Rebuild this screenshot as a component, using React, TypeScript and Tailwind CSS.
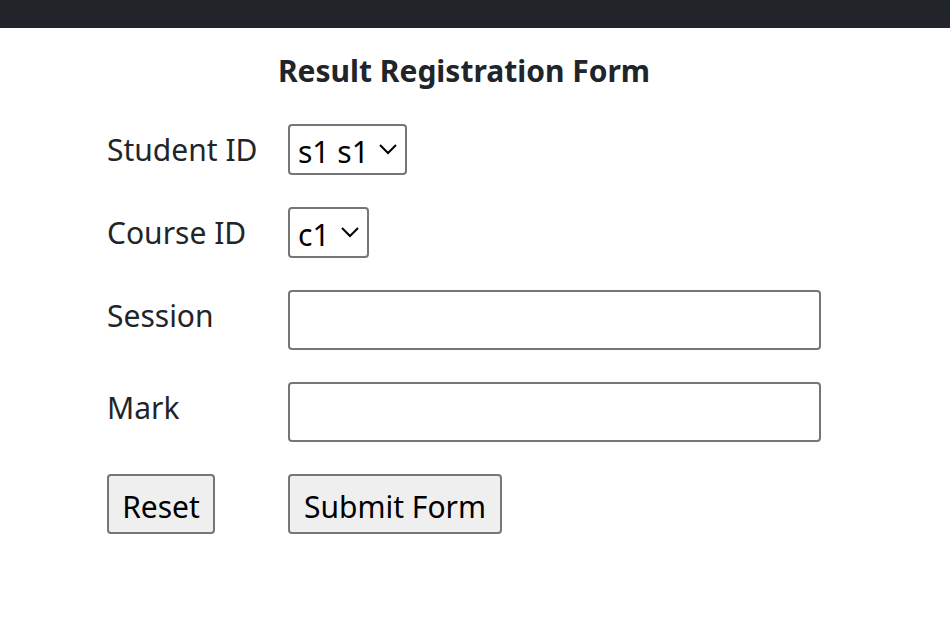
import React from "react";

const control = "rounded border-2 border-[#767676]";
const dropdown = `${control} block h-[51px] w-full appearance-none bg-white pl-2 pt-1 leading-10 text-black`;
const textBox = `${control} block h-[60px] w-full bg-white px-2 text-black`;
const button = `${control} h-[60px] bg-[#efefef] px-3 pt-1 text-black whitespace-nowrap`;

function Chevron() {
  return (
    <svg
      className="pointer-events-none absolute right-2 top-[18px] h-[14px] w-[20px]"
      viewBox="0 0 20 14"
      fill="none"
      stroke="#000"
      strokeWidth="2"
      aria-hidden="true"
    >
      <path d="M1 3l8 8 8-8" />
    </svg>
  );
}

export default function App() {
  return (
    <div className="min-h-screen bg-white font-['Segoe_UI','Noto_Sans',sans-serif] text-[30px] leading-[51px] text-[#212529]">
      <header className="h-7 bg-[#212529]" />
      <main className="pl-[107px] pr-[129px] pt-[17px]">
        <form onSubmit={(e) => e.preventDefault()}>
          <h1 className="text-center font-bold">Result Registration Form</h1>
          <div className="mt-7 grid grid-cols-[149px_1fr] gap-x-8 gap-y-8">
            <label htmlFor="student" className="whitespace-nowrap">Student ID</label>
            <div className="relative w-[119px]">
              <select id="student" className={dropdown}>
                <option>s1 s1</option>
              </select>
              <Chevron />
            </div>
            <label htmlFor="course" className="whitespace-nowrap">Course ID</label>
            <div className="relative w-[81px]">
              <select id="course" className={dropdown}>
                <option>c1</option>
              </select>
              <Chevron />
            </div>
            <label htmlFor="session">Session</label>
            <input id="session" type="text" className={textBox} />
            <label htmlFor="mark">Mark</label>
            <input id="mark" type="text" className={textBox} />
            <div>
              <button type="reset" className={`${button} w-[108px]`}>Reset</button>
            </div>
            <div>
              <button type="submit" className={`${button} w-[214px]`}>Submit Form</button>
            </div>
          </div>
        </form>
      </main>
    </div>
  );
}
